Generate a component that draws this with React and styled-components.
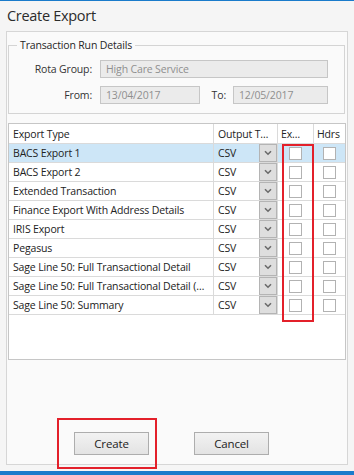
import React from "react";
import styled, { createGlobalStyle } from "styled-components";

const GlobalStyle = createGlobalStyle`
  html, body { margin: 0; padding: 0; }
  body {
    font-family: "Open Sans", "Liberation Sans", sans-serif;
    font-size: 10.5px;
    letter-spacing: -0.15px;
    color: #1e1e1e;
    background: #f5f5f5;
  }
`;

const Window = styled.div`
  position: relative;
  width: 354px;
  height: 475px;
  box-sizing: border-box;
  display: flex;
  flex-direction: column;
  border-top: 1px solid #1a7bcb;
  background: #f5f5f5;
`;

const Title = styled.h1`
  margin: 0;
  height: 30px;
  box-sizing: border-box;
  padding: 5px 0 0 7px;
  font-size: 14.5px;
  font-weight: 400;
  letter-spacing: -0.3px;
  line-height: 20px;
  color: #2b2b2b;
`;

const Panel = styled.div`
  flex: 0 0 434px;
  box-sizing: border-box;
  margin: 0 6px;
  border: 1px solid #d6d6d6;
  background: #fafafa;
  display: flex;
  flex-direction: column;
`;

const Group = styled.fieldset`
  margin: 6px 2px 0 1px;
  padding: 7px 0 9px 0;
  border: 1px solid #d4d4d4;
  min-width: 0;
`;

const Legend = styled.legend`
  margin-left: 8px;
  padding: 0 3px;
  line-height: 15px;
  color: #262626;
`;

const FieldGrid = styled.div`
  display: grid;
  grid-template-columns: 91px 100px 33px 95px;
  row-gap: 8px;
  align-items: center;
`;

const Label = styled.label`
  text-align: right;
  padding-right: ${(p) => p.$pad || 8}px;
  color: #333;
  white-space: nowrap;
`;

const Input = styled.div`
  grid-column: ${(p) => p.$span || "auto"};
  height: 18px;
  box-sizing: border-box;
  border: 1px solid #c6c6c6;
  background: #ebebeb;
  color: #8f8f8f;
  padding-left: 5px;
  line-height: 16px;
`;

const Grid = styled.div`
  margin: 9px 1px 0 1px;
  height: 237px;
  box-sizing: border-box;
  border: 1px solid #c6c6c6;
  background: #ffffff;
`;

const Row = styled.div`
  display: grid;
  grid-template-columns: 205px 64px 36px 1fr;
  height: ${(p) => (p.$head ? 20 : 19)}px;
  box-sizing: border-box;
  border-bottom: 1px solid #dadada;
  background: ${(p) => (p.$selected ? "#cde6f7" : "#ffffff")};
`;

const Cell = styled.div`
  display: flex;
  align-items: ${(p) => (p.$top ? "flex-start" : "center")};
  justify-content: ${(p) => (p.$center ? "center" : "flex-start")};
  padding-left: ${(p) => p.$pl ?? 4}px;
  padding-right: ${(p) => p.$pr ?? 5}px;
  border-right: ${(p) => (p.$last ? "none" : "1px solid #dadada")};
  overflow: hidden;
  white-space: nowrap;
  min-width: 0;
  color: #222;
`;

const CellText = styled.span`
  overflow: hidden;
  text-overflow: ellipsis;
  white-space: nowrap;
  flex: 1;
  line-height: 18px;
`;

const DropButton = styled.div`
  width: 18px;
  height: 18px;
  box-sizing: border-box;
  border: 1px solid #b4b4b4;
  background: #dedede;
  display: flex;
  align-items: center;
  justify-content: center;
  flex: 0 0 auto;
`;

const Check = styled.div`
  width: 13px;
  height: 13px;
  box-sizing: border-box;
  border: 1px solid #b2b2b2;
  background: #fff;
`;

const Buttons = styled.div`
  margin-top: auto;
  display: flex;
  gap: 45px;
  padding: 0 0 9px 67px;
`;

const Button = styled.button`
  width: 75px;
  height: 23px;
  box-sizing: border-box;
  border: 1px solid #adadad;
  background: linear-gradient(#f2f2f2, #e3e3e3);
  font-family: inherit;
  font-size: 11.5px;
  letter-spacing: -0.15px;
  color: #222;
  padding: 0;
`;

const BottomBar = styled.div`
  margin-top: 6px;
  height: 4px;
  background: #1a7bcb;
`;

const Highlight = styled.div`
  position: absolute;
  box-sizing: border-box;
  border: 2px solid #e3202a;
  pointer-events: none;
  left: ${(p) => p.$x}px;
  top: ${(p) => p.$y}px;
  width: ${(p) => p.$w}px;
  height: ${(p) => p.$h}px;
`;

const Chevron = () => (
  <svg width="8" height="6" viewBox="0 0 8 6">
    <path d="M1 1.2 L4 4.2 L7 1.2" fill="none" stroke="#6a6a6a" strokeWidth="1.6" />
  </svg>
);

const exportTypes = [
  "BACS Export 1",
  "BACS Export 2",
  "Extended Transaction",
  "Finance Export With Address Details",
  "IRIS Export",
  "Pegasus",
  "Sage Line 50: Full Transactional Detail",
  "Sage Line 50: Full Transactional Detail (Grouped)",
  "Sage Line 50: Summary",
];

export default function App() {
  return (
    <>
      <GlobalStyle />
      <Window>
        <Title>Create Export</Title>
        <Panel>
          <Group>
            <Legend>Transaction Run Details</Legend>
            <FieldGrid>
              <Label>Rota Group:</Label>
              <Input $span="2 / 5">High Care Service</Input>
              <Label>From:</Label>
              <Input>13/04/2017</Input>
              <Label $pad={7}>To:</Label>
              <Input>12/05/2017</Input>
            </FieldGrid>
          </Group>

          <Grid>
            <Row $head>
              <Cell><CellText>Export Type</CellText></Cell>
              <Cell $pr={6}><CellText>Output Type</CellText></Cell>
              <Cell $pl={3} $pr={8}><CellText>Export</CellText></Cell>
              <Cell $last $pl={3} $pr={0}><CellText>Hdrs</CellText></Cell>
            </Row>
            {exportTypes.map((name, i) => (
              <Row key={name} $selected={i === 0}>
                <Cell $pr={6}><CellText>{name}</CellText></Cell>
                <Cell $top $pr={0}>
                  <CellText>CSV</CellText>
                  <DropButton><Chevron /></DropButton>
                </Cell>
                <Cell $center $pl={0} $pr={0}><Check /></Cell>
                <Cell $center $last $pl={0} $pr={0}><Check /></Cell>
              </Row>
            ))}
          </Grid>

          <Buttons>
            <Button>Create</Button>
            <Button>Cancel</Button>
          </Buttons>
        </Panel>
        <BottomBar />
        <Highlight $x={282} $y={143} $w={32} $h={178} />
        <Highlight $x={57} $y={417} $w={100} $h={51} />
      </Window>
    </>
  );
}
